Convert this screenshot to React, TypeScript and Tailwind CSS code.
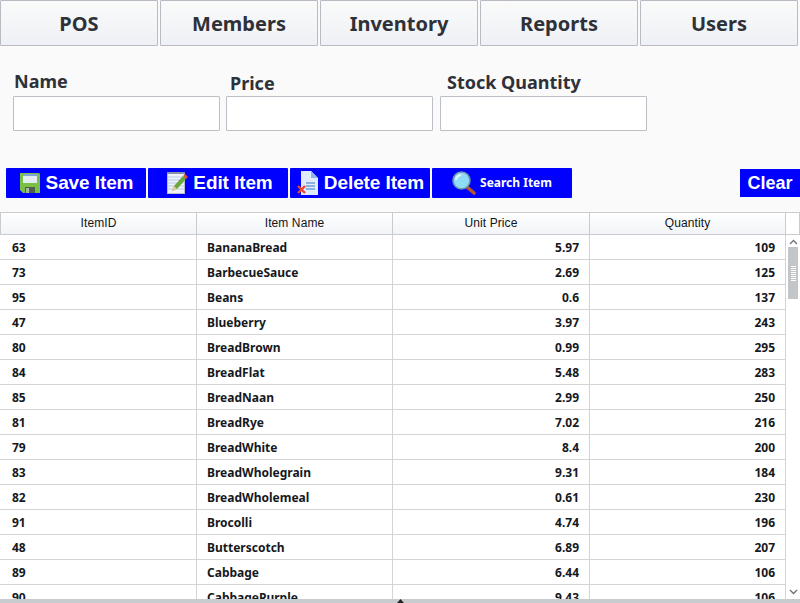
const tabs = ["POS", "Members", "Inventory", "Reports", "Users"];

const rows: [number, string, string, number][] = [
  [63, "BananaBread", "5.97", 109],
  [73, "BarbecueSauce", "2.69", 125],
  [95, "Beans", "0.6", 137],
  [47, "Blueberry", "3.97", 243],
  [80, "BreadBrown", "0.99", 295],
  [84, "BreadFlat", "5.48", 283],
  [85, "BreadNaan", "2.99", 250],
  [81, "BreadRye", "7.02", 216],
  [79, "BreadWhite", "8.4", 200],
  [83, "BreadWholegrain", "9.31", 184],
  [82, "BreadWholemeal", "0.61", 230],
  [91, "Brocolli", "4.74", 196],
  [48, "Butterscotch", "6.89", 207],
  [89, "Cabbage", "6.44", 106],
  [90, "CabbagePurple", "9.43", 106],
];

function SaveIcon() {
  return (
    <svg width="20" height="20" viewBox="0 0 20 20" className="shrink-0">
      <path d="M0 0h19l1 1v19H3l-3-3z" fill="#7ac143" />
      <rect x="3" y="1" width="14" height="9" fill="#e4ecf6" />
      <rect x="3" y="1" width="14" height="2" fill="#7fa6d6" />
      <rect x="5" y="14" width="10" height="6" fill="#4f5f4f" />
      <rect x="6" y="15" width="3" height="5" fill="#a9b5a9" />
    </svg>
  );
}

function EditIcon() {
  return (
    <svg width="21" height="22" viewBox="0 0 21 22" className="shrink-0">
      <rect x="0.5" y="0.5" width="17" height="21" fill="#f0f2fb" stroke="#b9bdd0" />
      <rect x="0" y="0" width="18" height="2" fill="#8b8fa8" />
      <path d="M1 5h16M1 8h16M1 11h16M1 14h16M1 17h16" stroke="#b7c9e8" />
      <path d="M5 19l2-5L16 4l3 3-9 10z" fill="#6aa83c" />
      <path d="M16 4l2-2 3 3-2 2z" fill="#d9553a" />
      <path d="M5 19l2-5 3 3z" fill="#e8c99a" />
    </svg>
  );
}

function DeleteIcon() {
  return (
    <svg width="22" height="25" viewBox="0 0 22 25" className="shrink-0">
      <path d="M4 0h10l7 7v17H4z" fill="#dfeafa" />
      <path d="M14 0v7h7z" fill="#8db6e6" />
      <path d="M9 12h9M9 15h9M9 18h9" stroke="#6f9fd8" strokeWidth="1.3" />
      <path d="M1 15l7 7M8 15l-7 7" stroke="#e8432c" strokeWidth="2.4" />
    </svg>
  );
}

function SearchIcon() {
  return (
    <svg width="24" height="24" viewBox="0 0 24 24" className="shrink-0">
      <path d="M15 16l7 6" stroke="#b5562c" strokeWidth="3.6" strokeLinecap="round" />
      <circle cx="9.5" cy="9.5" r="8.5" fill="#8fdcf8" stroke="#6f96ad" strokeWidth="1.6" />
      <path d="M4 9a5.5 5.5 0 0 1 5-5" stroke="#e4f7fe" strokeWidth="2" fill="none" />
    </svg>
  );
}

function ActionButton({ label, icon, small, className }: { label: string; icon: React.ReactNode; small?: boolean; className?: string }) {
  return (
    <button className={`w-[140px] h-[30px] flex items-center justify-center bg-[#0000ff] text-white rounded-[1px] ${className}`}>
      {icon}
      {small ? (
        <span className="ml-[-1px] text-[12px] font-bold font-['Noto_Sans',sans-serif]">{label}</span>
      ) : (
        <span className="text-[19px] tracking-[-0.1px] font-bold font-['Liberation_Sans',sans-serif]">{label}</span>
      )}
    </button>
  );
}

export default function App() {
  return (
    <div className="relative w-[800px] h-[603px] overflow-hidden flex flex-col bg-[#fafafa] font-['Noto_Sans',sans-serif]">
      {/* Top tabs */}
      <div className="flex gap-[2px] h-[46px]">
        {tabs.map((tab) => (
          <div
            key={tab}
            className="w-[158px] flex items-center justify-center pt-[2px] border border-[#b8bcc2] rounded-[1px] bg-gradient-to-b from-[#fafafa] to-[#eef1f5] text-[20px] font-bold text-[#2f3138]"
          >
            {tab}
          </div>
        ))}
      </div>

      {/* Item form */}
      <div className="flex h-[85px] pl-[13px]">
        <div className="w-[213px] flex flex-col">
          <label className="h-[50px] pt-[22px] pl-px text-[18px] leading-[27px] font-bold text-[#2f3138]">Name</label>
          <input className="w-[207px] h-[35px] bg-white border border-[#bcc0c6] rounded-[1px]" />
        </div>
        <div className="w-[214px] flex flex-col">
          <label className="h-[50px] pt-[24px] pl-[4px] text-[18px] leading-[27px] font-bold text-[#2f3138]">Price</label>
          <input className="w-[207px] h-[35px] bg-white border border-[#bcc0c6] rounded-[1px]" />
        </div>
        <div className="flex flex-col">
          <label className="h-[50px] pt-[23px] pl-[7px] text-[18px] leading-[27px] font-bold text-[#2f3138]">Stock Quantity</label>
          <input className="w-[207px] h-[35px] bg-white border border-[#bcc0c6] rounded-[1px]" />
        </div>
      </div>

      {/* Actions */}
      <div className="flex items-center h-[30px] mt-[37px] pl-[6px] gap-[2px]">
        <ActionButton label="Save Item" icon={<SaveIcon />} className="gap-[6px] pl-px" />
        <ActionButton label="Edit Item" icon={<EditIcon />} className="gap-[5px] pl-[4px]" />
        <ActionButton label="Delete Item" icon={<DeleteIcon />} className="gap-[5px] pl-px" />
        <ActionButton label="Search Item" icon={<SearchIcon />} className="gap-[5px]" small />
        <button className="ml-auto w-[60px] h-[28px] bg-[#0000ff] text-white text-[18px] font-bold font-['Liberation_Sans',sans-serif]">
          Clear
        </button>
      </div>

      {/* Table */}
      <div className="mt-[14px] flex-1 min-h-0 flex border-b-[4px] border-[#c9cccf] bg-white">
        <div className="w-[786px] flex flex-col overflow-hidden">
          <div className="flex h-[23px] shrink-0 border-y border-[#c8ccd1] bg-gradient-to-b from-white to-[#f2f4f7] text-[12px] tracking-[0.1px] text-[#111418] font-['Liberation_Sans',sans-serif]">
            <div className="w-[197px] pb-[2px] border-l border-r border-[#c8ccd1] flex items-center justify-center">ItemID</div>
            <div className="w-[196px] pb-[2px] border-r border-[#c8ccd1] flex items-center justify-center">Item Name</div>
            <div className="w-[197px] pb-[2px] border-r border-[#c8ccd1] flex items-center justify-center">Unit Price</div>
            <div className="w-[196px] pb-[2px] border-r border-[#c8ccd1] flex items-center justify-center">Quantity</div>
          </div>
          {rows.map(([id, name, price, qty]) => (
            <div key={id} className="flex h-[25px] shrink-0 border-b border-[#d4d4d4] text-[12px] font-bold text-[#15181c]">
              <div className="w-[197px] pt-[2px] border-r border-[#d4d4d4] flex items-center pl-[12px]">{id}</div>
              <div className="w-[196px] pt-[2px] border-r border-[#d4d4d4] flex items-center pl-[10px]">{name}</div>
              <div className="w-[197px] pt-[2px] border-r border-[#d4d4d4] flex items-center justify-end pr-[10px]">{price}</div>
              <div className="w-[196px] pt-[2px] border-r border-[#d4d4d4] flex items-center justify-end pr-[10px]">{qty}</div>
            </div>
          ))}
        </div>

        {/* Scrollbar */}
        <div className="flex-1 flex flex-col">
          <div className="h-[23px] border-y border-r border-[#c8ccd1]" />
          <div className="flex-1 flex flex-col bg-white pl-[2px] pr-[2px] pt-px">
            <div className="h-[11px] flex items-center justify-center">
              <svg width="9" height="6" viewBox="0 0 9 6"><path d="M1 5l3.5-3.5L8 5" stroke="#6d7278" strokeWidth="1.3" fill="none" /></svg>
            </div>
            <div className="h-[52px] bg-[#c3c6c9] flex flex-col items-center justify-center gap-px">
              {[0, 1, 2, 3, 4, 5, 6, 7].map((i) => (
                <div key={i} className="w-[5px] h-px bg-white" />
              ))}
            </div>
            <div className="flex-1" />
            <div className="h-[14px] flex items-center justify-center">
              <svg width="9" height="6" viewBox="0 0 9 6"><path d="M1 1l3.5 3.5L8 1" stroke="#6d7278" strokeWidth="1.3" fill="none" /></svg>
            </div>
          </div>
        </div>
      </div>

      {/* Resize handle on the bottom edge */}
      <svg width="7" height="4" viewBox="0 0 7 4" className="absolute left-[397px] bottom-0">
        <path d="M3.5 0L7 4H0z" fill="#222" />
      </svg>
    </div>
  );
}
